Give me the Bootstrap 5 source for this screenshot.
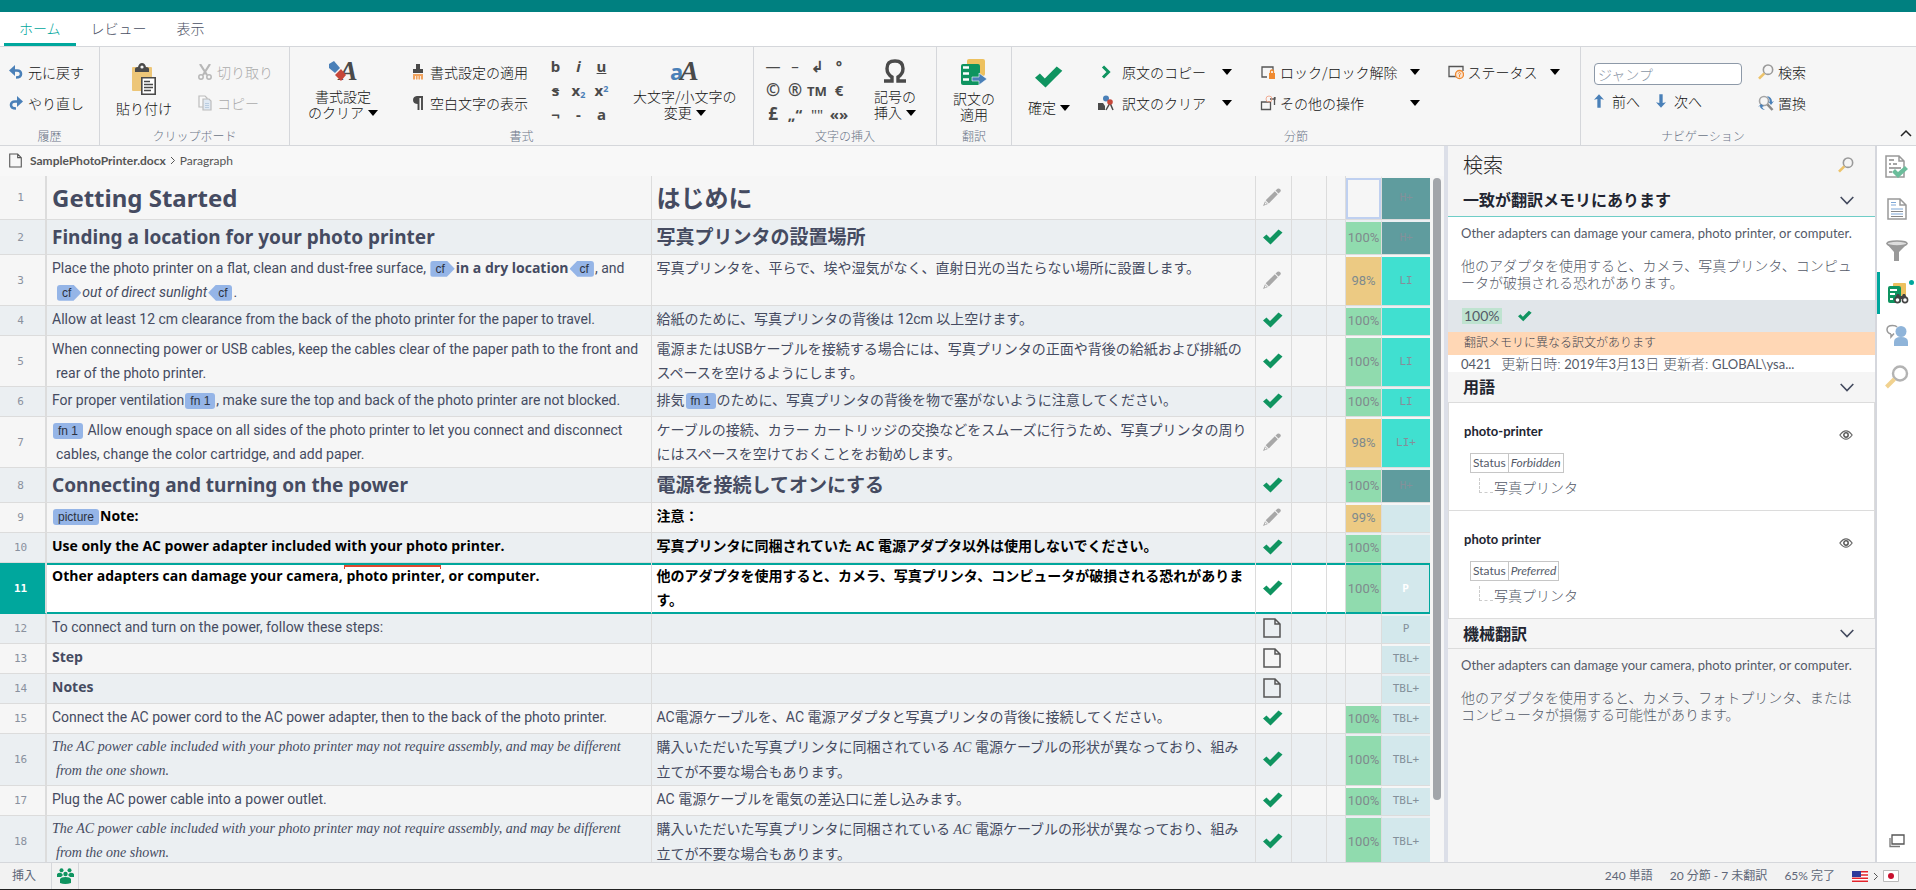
<!DOCTYPE html>
<html lang="ja">
<head>
<meta charset="utf-8">
<meta name="viewport" content="width=device-width, initial-scale=1">
<title>SamplePhotoPrinter.docx</title>
<link href="https://cdn.jsdelivr.net/npm/bootstrap@5.3.0/dist/css/bootstrap.min.css" rel="stylesheet">
<style>
:root{--teal:#00a79d;--ink:#4a4f63;--line:#dcdcdc;--ui:"Noto Sans CJK JP",sans-serif}
body{font-family:var(--ui);font-size:14px;line-height:20px;color:#222;background:#f6f6f6;overflow:hidden}
button{background:none;border:0;padding:0;color:inherit;font:inherit;text-align:center}
svg{display:block;flex:none}
.brandbar{height:12px;background:#008080}
.tabs{height:35px;background:#fff;border-bottom:1px solid #d5d7db;padding-left:4px;font-weight:300}
.tabs .nav-link{color:var(--ink);padding:6px 15px 0;height:34px;border-bottom:3px solid transparent}
.tabs .nav-link.active{color:var(--teal);border-color:var(--teal)}
.ribbon{height:99px;border-bottom:1px solid #d5d7db;font-weight:300;color:#111}
.rgroup{position:relative;display:flex;flex-direction:column;border-right:1px solid #d5d7db;height:98px}
.rgroup>.tools{flex:1;display:flex;align-items:flex-start}
.rlabel{font-size:12px;line-height:18px;color:#6a7486;text-align:center;height:18px}
.cmd{display:flex;align-items:center;height:20px;white-space:nowrap;text-align:left}
.cmd svg{width:16px;height:16px}
.stack{display:flex;flex-direction:column;gap:11px;padding-top:15px}
.bigcmd{display:flex;flex-direction:column;align-items:center;padding-top:12px;line-height:16px;white-space:nowrap}
.bigcmd svg.pic{margin-bottom:5px;overflow:visible}
.clearfmt{margin-left:18px}
.tri{display:inline-block;border:5px solid transparent;border-top:6px solid #000;border-bottom:0;vertical-align:2px;margin-left:4px}
.off{opacity:.35}
.glyphs{display:grid;justify-items:center;align-items:center;grid-auto-rows:24px;color:#4a4a4a;font-family:"Noto Sans",sans-serif;font-weight:700;padding-top:7px}
.glyphs button{font-size:15px;line-height:24px;min-width:20px}
.glyphs .wide{font-size:17px}
.glyphs sub,.glyphs sup{font-size:9px;color:#4a80b8}
.jump{height:22px;width:148px;padding:0 3px;font-size:14px;font-weight:300;border:1px solid #8d99a8;border-radius:4px;background:#fff}
.jump::placeholder{color:#8a96a6}
.navtools{display:flex;flex-direction:column;gap:6px;padding:16px 0 0 13px}
.crumbs{height:30px;background:#f8f8f8;font-size:12px;padding-left:9px;color:#555;font-family:Lato,sans-serif}
.seg{width:100%;border-collapse:separate;border-spacing:0;table-layout:fixed;color:#454b61;font-family:Roboto,"Noto Sans CJK JP",sans-serif;line-height:24px}
.seg tr{background:#f6f6f6}.seg tr:nth-child(even){background:#ebeff2}
.seg td{height:30px;padding:1px 4px 1px 5px;border-bottom:1px solid var(--line);border-right:1px solid var(--line);vertical-align:top}
.seg td:nth-child(2){padding-left:9px;text-indent:-4px}
.seg td:first-child{padding:2px 4px 0 0;text-align:center;vertical-align:middle;border-right:2px solid var(--line);color:#8a919e;font:11px/24px "DejaVu Sans Mono",monospace}
.seg b,.seg .strong-row{font-family:"Open Sans","Noto Sans CJK JP",sans-serif;font-weight:700}
.seg .strong-row{color:#000}
.seg td:nth-child(4){vertical-align:middle;padding:0 0 0 7px}
.seg td.pct,.seg td.loc{border-top:2px solid transparent;background-clip:padding-box;vertical-align:middle;text-align:center;padding:0;font-size:13px;color:#7f8a8d}
.seg td.loc{border-right:0;font:11px/20px "DejaVu Sans Mono",monospace;color:#83909a}
.p100{background-color:#90dbae}.p98{background-color:#ecca83}
.lh{background-color:#5f9c9e}.ll{background-color:#40e0d0}.lp{background-color:#d3e8ec}
.seg tr.h1row td{height:44px}
.seg tr.h2row td{height:35px}
.seg tr.h1row td.txt{font:700 24px/24px "Noto Sans","Noto Sans CJK JP",sans-serif;padding-top:10px}
.seg tr.h2row td.txt{font:700 19px/24px "Noto Sans","Noto Sans CJK JP",sans-serif;padding-top:5px}
.seg tr.cur{background:#fff}
.seg tr.cur td{box-shadow:inset 0 2px var(--teal),inset 0 -1px var(--teal);border-bottom-color:var(--teal);color:#000}
.seg tr.cur td:first-child{background:var(--teal);border-right-color:var(--line);color:#fff;font-weight:700}
.seg tr.cur td.pct,.seg tr.cur td.loc{border-top-color:var(--teal);box-shadow:inset 0 -1px var(--teal);color:#7f8a8d}
.seg tr.cur td.loc{border-right:1px solid var(--teal);color:#fff;font-weight:700}
.serif-it{font-family:"Liberation Serif","Noto Sans CJK JP",serif;font-style:italic}
.empty{box-shadow:inset 0 0 0 2px #bfd0f0}
.chip{display:inline-block;background:#95b5e7;color:#2b3140;font:normal 12px/16px "Liberation Sans",sans-serif;text-indent:0;padding:0 5px;border-radius:3px;margin:0 1px}
.chip.open{padding-right:10px;clip-path:polygon(0 0,68% 0,100% 50%,68% 100%,0 100%)}
.chip.close-t{padding-left:10px;clip-path:polygon(32% 0,100% 0,100% 100%,32% 100%,0 50%)}
.term{position:relative;text-indent:0;display:inline-block}
.term::before{content:"";position:absolute;left:-2px;right:0;top:1px;height:4px;border:1px solid #e0482f;border-top-width:2px;border-bottom:0}
.sbar{width:14px;padding:2px 3px 0}
.sbar div{width:8px;height:91%;background:#a2a5aa;border-radius:4px}
.side{width:433px;border-left:4px solid #dcdfe8;border-right:2px solid #d5d7dd;background:#f5f5f5;color:#545a68;font-family:Lato,"Noto Sans CJK JP",sans-serif}
.side h2{font-size:20px;font-weight:300;color:#222;margin:0;line-height:38px}
.side h3{font-size:16px;font-weight:700;color:#222531;margin:0;line-height:28px}
.side article b{color:#222531;font-size:13px}
.sec{display:flex;justify-content:space-between;align-items:center;padding:0 21px 0 15px;height:30px}
.mt{background:#fff;padding:6px 13px 9px;line-height:17px;font-family:"Noto Sans CJK JP",sans-serif;font-weight:300}
.mt p{margin:0 0 14px;font:13px/20px Lato,sans-serif}
.tmscore{height:32px;background:#e1e6ea;padding-left:14px}
.tmscore span{background:#bfe3d0;padding:0 2px;line-height:16px}
.tmnote{background:#ffd7b5;height:23px;line-height:21px;padding-left:16px;font-size:12px;font-weight:300;color:#3f4450}
.tmmeta{background:#fff;height:17px;line-height:17px;padding-left:13px;font-weight:300}
.tmmeta span{font-size:13px;font-weight:400}
.termcard{background:#fff;border:1px solid var(--line);border-top:0;height:108px;padding:18px 21px 0 15px}
.sec+.termcard{border-top:1px solid var(--line);height:109px}
.st{display:inline-flex;border:1px solid #c6c6c6;font-size:12px;line-height:18px;margin:12px 0 0 6px}
.st span{padding:0 2px}.st span+span{border-left:1px solid #c6c6c6;font-style:italic}
.tr-line{display:flex;margin-top:5px;font-weight:300}
.tree{width:14px;height:15px;border-left:1px dashed #ccc;border-bottom:1px dashed #ccc;margin:0 1px 0 15px}
.rail{width:39px;background:#fff}
.rail button{height:42px;width:39px;display:flex;align-items:center;justify-content:center;position:relative}
.rail button.on{border-left:3px solid var(--teal)}
.dot{position:absolute;right:2px;top:8px;width:5px;height:5px;border-radius:50%;background:var(--teal)}
.status{height:28px;background:#f2f2f2;border-top:1px solid #d5d7db;border-bottom:1px solid #222;font-size:12px;color:#5f6778;font-family:Lato,"Noto Sans CJK JP",sans-serif}
.status .mode{width:52px;border-right:1px solid #d5d7db;padding-left:12px}
.status .ppl{width:27px;border-right:1px solid #d5d7db}
.counts{gap:17px;padding-right:17px}
</style>
</head>
<body>
<svg width="0" height="0" class="position-absolute">
<symbol id="ok" viewBox="0 0 20 16"><path d="M0 8.500L3.500 5.500L7 9L15.500 .500L19.500 3.500L7.500 15.500Z" fill="#0f9460"/></symbol>
<symbol id="pen" viewBox="0 0 18 18"><path d="M12.500 2.500L14.500 .700Q16 0 17.200 1.200T17.300 3.800L15.500 5.500ZM11.800 3.300L14.800 6.300L5.800 15.400L2.700 12.300ZM2 13.200L4.900 16.100L0 18Z" fill="#a8a8a8"/><path d="M2.200 14.200L3.800 15.800L1.800 16.500Z" fill="#f6f6f6"/></symbol>
<symbol id="doc" viewBox="0 0 18 20"><path d="M1 1H12L17 6V19H1Z M12 1V6H17" fill="none" stroke="#555" stroke-width="1.500"/></symbol>
<symbol id="mag" viewBox="0 0 24 24"><circle cx="15" cy="8.500" r="7" fill="none" stroke="#9a9a9a" stroke-width="2.400"/><path d="M9.500 14L1.500 22" stroke="#edc36a" stroke-width="4"/></symbol>
<symbol id="chev" viewBox="0 0 14 9"><path d="M.700 1L7 7.600L13.300 1" fill="none" stroke="#434a5e" stroke-width="1.600"/></symbol>
<symbol id="eye" viewBox="0 0 16 12"><path d="M1 6Q8-3.500 15 6Q8 15.500 1 6Z" fill="none" stroke="#666" stroke-width="1.400"/><circle cx="8" cy="6" r="2.500" fill="none" stroke="#555" stroke-width="1.700"/></symbol>
</svg>

<div class="d-flex flex-column vh-100">
<header>
<div class="brandbar"></div>
<nav class="nav tabs">
<a class="nav-link active" href="#">ホーム</a><a class="nav-link" href="#">レビュー</a><a class="nav-link" href="#">表示</a>
</nav>
<div class="ribbon d-flex">
  <section class="rgroup" style="width:100px">
    <div class="tools ps-2"><div class="stack">
      <button class="cmd gap-1"><svg viewBox="0 0 16 16"><path d="M3 6.500H9Q13 6.500 13 10T8 13.500" fill="none" stroke="#4a80b8" stroke-width="2.600"/><path d="M7 1L1 6.500L7 12Z" fill="#4a80b8"/></svg>元に戻す</button>
      <button class="cmd gap-1"><svg viewBox="0 0 16 16"><path d="M13 6.500H7Q3 6.500 3 10T8 13.500" fill="none" stroke="#4a80b8" stroke-width="2.600"/><path d="M9 1L15 6.500L9 12Z" fill="#4a80b8"/></svg>やり直し</button>
    </div></div><div class="rlabel">履歴</div>
  </section>
  <section class="rgroup" style="width:190px">
    <div class="tools justify-content-between ps-3 pe-3">
      <button class="bigcmd pt-3"><svg class="pic" width="26" height="32" viewBox="0 0 26 32"><rect x="1" y="4" width="20" height="24" rx="1" fill="#edc678"/><path d="M4 9V6Q4 4 7 4Q8 0 11 0T15 4Q18 4 18 6V9Z" fill="#4a4a4a"/><circle cx="11" cy="4" r="1.600" fill="#f6f6f6"/><path d="M10.800 14.800H24.200V31.200H10.800Z" fill="#fff" stroke="#4a4a4a" stroke-width="1.600"/><path d="M13 18.500H19M13 21.500H22M13 24.500H22M13 27.500H20" stroke="#4a4a4a" stroke-width="1.400"/></svg>貼り付け</button>
      <div class="stack">
      <button class="cmd gap-1 off" disabled><svg viewBox="0 0 16 16"><path d="M3 0L10 11M13 0L6 11" stroke="#444" stroke-width="2.200"/><g fill="none" stroke="#444" stroke-width="1.500"><circle cx="4" cy="13" r="2.200"/><circle cx="12" cy="13" r="2.200"/></g></svg>切り取り</button>
      <button class="cmd gap-1 off" disabled><svg viewBox="0 0 16 16"><g fill="#fff" stroke="#555" stroke-width="1.200"><path d="M2 1H8L10 3V12H2Z"/><path fill="#b9d2ee" d="M6 4H12L14 6V15H6Z"/></g><path d="M8 8.500H12M8 10.500H12M8 12.500H12" stroke="#4a80b8"/></svg>コピー</button>
      </div>
    </div><div class="rlabel">クリップボード</div>
  </section>
  <section class="rgroup" style="width:464px">
    <div class="tools">
      <button class="bigcmd clearfmt"><svg class="pic" width="32" height="24" viewBox="0 0 32 24"><text x="12" y="21" font-family="Liberation Serif" font-weight="700" font-style="italic" font-size="28" fill="#4a4a4a">A</text><path d="M2 5L7 2L13 9L8 14L2 9Z" fill="#4a80b8"/><path d="M8 16L14 10L19 16L14 22Z" fill="#c6473a"/></svg>書式設定<span>のクリア<i class="tri"></i></span></button>
      <div class="stack ms-4 ps-2">
      <button class="cmd gap-1"><svg viewBox="0 0 16 16"><path d="M6 0H10V5H13V9H3V5H6Z" fill="#4a4a4a"/><path d="M3 10H13V15.500H3Z" fill="#f0a35f"/><path d="M5.500 12V16M8 12V16M10.500 12V16" stroke="#fff" stroke-width=".800"/></svg>書式設定の適用</button>
      <button class="cmd gap-1"><svg viewBox="0 0 16 16"><path d="M6.500 2H13M8.500 2V15M12 2V15" stroke="#4a4a4a" stroke-width="1.900"/><path d="M8 1Q3 1 3 5T8 9Z" fill="#4a4a4a"/></svg>空白文字の表示</button>
      </div>
      <div class="glyphs ms-3" style="grid-template-columns:repeat(3,23px)">
      <button>b</button><button><i>i</i></button><button><u>u</u></button><button><s>s</s></button><button>x<sub>2</sub></button><button>x<sup>2</sup></button><button>¬</button><button>-</button><button>a</button>
      </div>
      <button class="bigcmd ms-3 ps-1"><svg class="pic" width="30" height="24" viewBox="0 0 30 24"><text x="0" y="21" font-family="Noto Sans" font-weight="700" font-size="22" fill="#4a80b8">a</text><text x="10" y="21" font-family="Liberation Serif" font-weight="700" font-style="italic" font-size="28" fill="#4a4a4a">A</text></svg>大文字/小文字の<span>変更<i class="tri"></i></span></button>
    </div><div class="rlabel">書式</div>
  </section>
  <section class="rgroup" style="width:183px">
    <div class="tools ps-2">
      <div class="glyphs" style="grid-template-columns:repeat(4,22px)">
      <button class="fw-normal">—</button><button class="fw-normal">–</button><button>↲</button><button>°</button><button class="wide">©</button><button class="wide">®</button><button><small>TM</small></button><button>€</button><button class="wide">£</button><button>„“</button><button class="fw-normal">""</button><button>«»</button>
      </div>
      <button class="bigcmd ms-4"><svg class="pic" width="24" height="24" viewBox="0 0 24 24"><path d="M1 22H9V18Q4 15 4 9.500Q4 2 12 2T20 9.500Q20 15 15 18V22H23" fill="none" stroke="#4a4a4a" stroke-width="3.400"/></svg>記号の<span>挿入<i class="tri"></i></span></button>
    </div><div class="rlabel">文字の挿入</div>
  </section>
  <section class="rgroup" style="width:75px">
    <div class="tools justify-content-center"><button class="bigcmd"><svg class="pic" width="28" height="26" viewBox="0 0 28 26"><rect x="7" y="0" width="18" height="17" rx="2" fill="#edc15f"/><rect x="1" y="5" width="19" height="21" rx="2" fill="#0f9460"/><path d="M3 8.500H9M3 14.500H9M3 20.500H9" stroke="#fff" stroke-width="2.400"/><path d="M12 18H19V14L27 20L19 26V22H12Z" fill="#4a80b8" stroke="#fff" stroke-width=".600"/></svg>訳文の<span>適用</span></button></div>
    <div class="rlabel">翻訳</div>
  </section>
  <section class="rgroup" style="width:569px">
    <div class="tools">
      <button class="bigcmd ms-3 pt-3"><svg class="pic mb-2" width="28" height="28"><use href="#ok"/></svg><span>確定<i class="tri"></i></span></button>
      <div class="stack ms-4 ps-1">
      <button class="cmd gap-2"><svg viewBox="0 0 16 16"><path d="M5 2.500L10.500 8L5 13.500" fill="none" stroke="#0f9460" stroke-width="3"/></svg>原文のコピー<i class="tri ms-2"></i></button>
      <button class="cmd gap-2"><svg viewBox="0 0 16 16"><path d="M0 15V8H5L7 11V15Z" fill="#4a4a4a"/><path d="M8 15L12 8L15 15" fill="none" stroke="#4a4a4a" stroke-width="1.500"/><circle cx="8" cy="3.500" r="3" fill="#4a80b8"/><circle cx="12" cy="7" r="2.800" fill="#c6473a"/></svg>訳文のクリア<i class="tri ms-2"></i></button>
      </div>
      <div class="stack ms-4 ps-1">
      <button class="cmd gap-1"><svg viewBox="0 0 16 16"><path d="M7 13H2V3H13V7" fill="none" stroke="#555" stroke-width="1.300"/><rect x="9" y="9" width="6" height="6" fill="#f08a30"/><path d="M10.500 9V7Q12 5 13.500 7V9" fill="none" stroke="#f08a30" stroke-width="1.300"/></svg>ロック/ロック解除<i class="tri ms-2"></i></button>
      <button class="cmd gap-1"><svg viewBox="0 0 16 16"><path d="M1.500 7H10.500V14.500H1.500ZM10 4H15V2M14.500 2V10" fill="none" stroke="#555" stroke-width="1.300"/><circle cx="9" cy="4" r="3" fill="none" stroke="#f0a58a" stroke-width=".900"/></svg>その他の操作<i class="tri ms-auto"></i></button>
      </div>
      <div class="stack ms-4 ps-1">
      <button class="cmd gap-1"><svg viewBox="0 0 16 16"><path d="M8 12.500H1V2.500H15V7" fill="none" stroke="#555" stroke-width="1.300"/><circle cx="11.500" cy="10.500" r="4" fill="#fbe3cf" stroke="#f08a30" stroke-width="1.300"/><path d="M10.300 9.500Q11.500 7.500 12.700 9.500L11.500 11V13" fill="none" stroke="#f08a30"/></svg>ステータス<i class="tri ms-2"></i></button>
      </div>
    </div><div class="rlabel">分節</div>
  </section>
  <section class="rgroup flex-grow-1 border-0 align-items-start">
    <div class="tools">
      <div class="navtools"><input class="form-control jump" placeholder="ジャンプ" aria-label="ジャンプ">
        <div class="d-flex gap-3"><button class="cmd gap-2"><svg viewBox="0 0 12 16" style="width:10px"><path d="M6 0L12 6.500L8 5.500V16H4V5.500L0 6.500Z" fill="#4a80b8"/></svg>前へ</button><button class="cmd gap-2"><svg viewBox="0 0 12 16" style="width:10px"><path d="M6 16L12 9.500L8 10.500V0H4V10.500L0 9.500Z" fill="#4a80b8"/></svg>次へ</button></div></div>
      <div class="stack ms-3">
      <button class="cmd gap-1"><svg><use href="#mag"/></svg>検索</button>
      <button class="cmd gap-1"><svg viewBox="0 0 16 16"><circle cx="6" cy="6" r="4.500" fill="none" stroke="#a5a5a5" stroke-width="1.600"/><path d="M9.500 9.500L14.500 15" stroke="#8a8a8a" stroke-width="2.600"/><path d="M9 1Q14 2 14 7L16 6L13 10L10 6L12 7Q12 4 9 1ZM7 15Q2 14 2 11L0 12L3 9L6 11L4 12Q5 14 7 15Z" fill="#4a80b8"/></svg>置換</button>
      </div>
    </div><div class="rlabel ms-3" style="width:212px">ナビゲーション</div>
    <button class="position-absolute bottom-0 end-0 me-1 mb-1" aria-label="リボンを折りたたむ"><svg width="12" height="14" viewBox="0 0 12 14"><path d="M1 9L6 4L11 9" fill="none" stroke="#222" stroke-width="1.500"/></svg></button>
  </section>
</div>
</header>

<main class="d-flex flex-grow-1" style="min-height:0">
<div class="flex-grow-1 d-flex flex-column overflow-hidden">
  <div class="crumbs d-flex align-items-center gap-1"><svg class="me-1" width="13" height="15"><use href="#doc"/></svg><b>SamplePhotoPrinter.docx</b><svg width="6" height="9" viewBox="0 0 6 9"><path d="M1 1L4.500 4.500L1 8" fill="none" stroke="#555"/></svg><span>Paragraph</span></div>
  <div class="d-flex flex-grow-1 overflow-hidden">
  <div class="flex-grow-1 overflow-hidden">
  <table class="seg">
  <colgroup><col style="width:47px"><col><col><col style="width:36px"><col style="width:35px"><col style="width:19px"><col style="width:36px"><col style="width:48px"></colgroup>
  <tbody>
  <tr class="h1row"><td>1</td><td class="txt">Getting Started</td><td class="txt">はじめに</td><td><svg width="18" height="18"><use href="#pen"/></svg></td><td></td><td></td><td class="pct empty"></td><td class="loc lh">H+</td></tr>
  <tr class="h2row"><td>2</td><td class="txt">Finding a location for your photo printer</td><td class="txt">写真プリンタの設置場所</td><td><svg width="20" height="16"><use href="#ok"/></svg></td><td></td><td></td><td class="pct p100">100%</td><td class="loc lh">H+</td></tr>
  <tr><td>3</td><td>Place the photo printer on a flat, clean and dust-free surface, <span class="chip open">cf</span><b>in a dry location</b><span class="chip close-t">cf</span>, and <span class="chip open">cf</span><i>out of direct sunlight</i><span class="chip close-t">cf</span>.</td><td>写真プリンタを、平らで、埃や湿気がなく、直射日光の当たらない場所に設置します。</td><td><svg width="18" height="18"><use href="#pen"/></svg></td><td></td><td></td><td class="pct p98">98%</td><td class="loc ll">LI</td></tr>
  <tr><td>4</td><td>Allow at least 12 cm clearance from the back of the photo printer for the paper to travel.</td><td>給紙のために、写真プリンタの背後は 12cm 以上空けます。</td><td><svg width="20" height="16"><use href="#ok"/></svg></td><td></td><td></td><td class="pct p100">100%</td><td class="loc ll"></td></tr>
  <tr><td>5</td><td>When connecting power or USB cables, keep the cables clear of the paper path to the front and rear of the photo printer.</td><td>電源またはUSBケーブルを接続する場合には、写真プリンタの正面や背後の給紙および排紙のスペースを空けるようにします。</td><td><svg width="20" height="16"><use href="#ok"/></svg></td><td></td><td></td><td class="pct p100">100%</td><td class="loc ll">LI</td></tr>
  <tr><td>6</td><td>For proper ventilation<span class="chip">fn 1</span>, make sure the top and back of the photo printer are not blocked.</td><td>排気<span class="chip">fn 1</span>のために、写真プリンタの背後を物で塞がないように注意してください。</td><td><svg width="20" height="16"><use href="#ok"/></svg></td><td></td><td></td><td class="pct p100">100%</td><td class="loc ll">LI</td></tr>
  <tr><td>7</td><td><span class="chip">fn 1</span> Allow enough space on all sides of the photo printer to let you connect and disconnect cables, change the color cartridge, and add paper.</td><td>ケーブルの接続、カラー カートリッジの交換などをスムーズに行うため、写真プリンタの周りにはスペースを空けておくことをお勧めします。</td><td><svg width="18" height="18"><use href="#pen"/></svg></td><td></td><td></td><td class="pct p98">98%</td><td class="loc ll">LI+</td></tr>
  <tr class="h2row"><td>8</td><td class="txt">Connecting and turning on the power</td><td class="txt">電源を接続してオンにする</td><td><svg width="20" height="16"><use href="#ok"/></svg></td><td></td><td></td><td class="pct p100">100%</td><td class="loc lh">H+</td></tr>
  <tr><td>9</td><td class="strong-row"><span class="chip">picture</span>Note:</td><td class="strong-row">注意：</td><td><svg width="18" height="18"><use href="#pen"/></svg></td><td></td><td></td><td class="pct p98">99%</td><td class="loc lp"></td></tr>
  <tr><td>10</td><td class="strong-row">Use only the AC power adapter included with your photo printer.</td><td class="strong-row">写真プリンタに同梱されていた AC 電源アダプタ以外は使用しないでください。</td><td><svg width="20" height="16"><use href="#ok"/></svg></td><td></td><td></td><td class="pct p100">100%</td><td class="loc lp"></td></tr>
  <tr class="cur"><td>11</td><td class="strong-row">Other adapters can damage your camera, <span class="term">photo printer</span>, or computer.</td><td class="strong-row">他のアダプタを使用すると、カメラ、写真プリンタ、コンピュータが破損される恐れがあります。</td><td><svg width="20" height="16"><use href="#ok"/></svg></td><td></td><td></td><td class="pct p100">100%</td><td class="loc lp">P</td></tr>
  <tr><td>12</td><td>To connect and turn on the power, follow these steps:</td><td></td><td><svg width="18" height="20"><use href="#doc"/></svg></td><td></td><td></td><td></td><td class="loc lp">P</td></tr>
  <tr><td>13</td><td><b>Step</b></td><td></td><td><svg width="18" height="20"><use href="#doc"/></svg></td><td></td><td></td><td></td><td class="loc lp">TBL+</td></tr>
  <tr><td>14</td><td><b>Notes</b></td><td></td><td><svg width="18" height="20"><use href="#doc"/></svg></td><td></td><td></td><td></td><td class="loc lp">TBL+</td></tr>
  <tr><td>15</td><td>Connect the AC power cord to the AC power adapter, then to the back of the photo printer.</td><td>AC電源ケーブルを、AC 電源アダプタと写真プリンタの背後に接続してください。</td><td><svg width="20" height="16"><use href="#ok"/></svg></td><td></td><td></td><td class="pct p100">100%</td><td class="loc lp">TBL+</td></tr>
  <tr><td>16</td><td class="serif-it">The AC power cable included with your photo printer may not require assembly, and may be different from the one shown.</td><td>購入いただいた写真プリンタに同梱されている <span class="serif-it">AC</span> 電源ケーブルの形状が異なっており、組み立てが不要な場合もあります。</td><td><svg width="20" height="16"><use href="#ok"/></svg></td><td></td><td></td><td class="pct p100">100%</td><td class="loc lp">TBL+</td></tr>
  <tr><td>17</td><td>Plug the AC power cable into a power outlet.</td><td>AC 電源ケーブルを電気の差込口に差し込みます。</td><td><svg width="20" height="16"><use href="#ok"/></svg></td><td></td><td></td><td class="pct p100">100%</td><td class="loc lp">TBL+</td></tr>
  <tr><td>18</td><td class="serif-it">The AC power cable included with your photo printer may not require assembly, and may be different from the one shown.</td><td>購入いただいた写真プリンタに同梱されている <span class="serif-it">AC</span> 電源ケーブルの形状が異なっており、組み立てが不要な場合もあります。</td><td><svg width="20" height="16"><use href="#ok"/></svg></td><td></td><td></td><td class="pct p100">100%</td><td class="loc lp">TBL+</td></tr>
  </tbody></table>
  </div>
  <div class="sbar"><div></div></div>
  </div>
</div>

<aside class="side flex-shrink-0">
  <div class="sec" style="height:38px"><h2>検索</h2><svg width="16" height="16"><use href="#mag"/></svg></div>
  <div class="sec" style="height:33px;border-bottom:1px solid #6fcdc7"><h3>一致が翻訳メモリにあります</h3><svg width="14" height="9"><use href="#chev"/></svg></div>
  <div class="mt"><p>Other adapters can damage your camera, photo printer, or computer.</p>他のアダプタを使用すると、カメラ、写真プリンタ、コンピュータが破損される恐れがあります。</div>
  <div class="tmscore d-flex align-items-center gap-3"><span>100%</span><svg width="14" height="12"><use href="#ok"/></svg></div>
  <div class="tmnote">翻訳メモリに異なる訳文があります</div>
  <div class="tmmeta"><span>0421 &nbsp; </span>更新日時: <span>2019</span>年<span>3</span>月<span>13</span>日 更新者: <span>GLOBAL\ysa...</span></div>
  <div class="sec"><h3>用語</h3><svg width="14" height="9"><use href="#chev"/></svg></div>
  <article class="termcard"><div class="d-flex justify-content-between align-items-center"><b>photo-printer</b><svg width="14" height="12" class="mt-2"><use href="#eye"/></svg></div><div class="st"><span>Status</span><span>Forbidden</span></div><div class="tr-line"><div class="tree"></div>写真プリンタ</div></article>
  <article class="termcard"><div class="d-flex justify-content-between align-items-center"><b>photo printer</b><svg width="14" height="12" class="mt-2"><use href="#eye"/></svg></div><div class="st"><span>Status</span><span>Preferred</span></div><div class="tr-line"><div class="tree"></div>写真プリンタ</div></article>
  <div class="sec" style="border-bottom:1px solid #dcdcdc"><h3>機械翻訳</h3><svg width="14" height="9"><use href="#chev"/></svg></div>
  <div class="mt bg-transparent"><p>Other adapters can damage your camera, photo printer, or computer.</p>他のアダプタを使用すると、カメラ、フォトプリンタ、またはコンピュータが損傷する可能性があります。</div>
</aside>

<nav class="rail flex-shrink-0 d-flex flex-column">
  <button><svg width="24" height="24" viewBox="0 0 24 24"><path d="M1 1H14L19 6V22H1Z M14 1V6H19" fill="#fff" stroke="#999" stroke-width="1.500"/><path d="M4 5H9M4 9H6M8 9H12M4 13H16M4 17H7" stroke="#888" stroke-width="1.300"/><path d="M7 17L10 14L13 17L20 11L23 14L13 23Z" fill="#6bbd9b"/></svg></button>
  <button><svg width="20" height="22" viewBox="0 0 20 22"><path d="M1 1H13L19 7V21H1Z M13 1V7H19" fill="#fff" stroke="#999" stroke-width="1.500"/><path d="M4 4.500H9M4 7H9M4 11H16M4 16H16" stroke="#7fa8d8" stroke-width="1.100"/><path d="M4 13.500H16M4 18.500H16" stroke="#888" stroke-width="1.100"/></svg></button>
  <button><svg width="22" height="22" viewBox="0 0 22 22"><path d="M0 3L8 12V21H13V12L22 3Z" fill="#999"/><ellipse cx="11" cy="3.500" rx="10" ry="2.500" fill="#ddd" stroke="#999" stroke-width="1.500"/></svg></button>
  <button class="on"><svg width="22" height="22" viewBox="0 0 22 22"><rect x="6" y="1" width="13" height="13" rx="1" fill="#edc15f"/><rect x="1" y="4" width="13" height="17" rx="2" fill="#0f9460"/><path d="M3 8H10M3 12H8M3 17H6" stroke="#fff" stroke-width="1.800"/><path d="M8 16L10 12H12L13 14H15L16 12H18L20 16L20 17H8Z" fill="#444"/><g fill="#fff" stroke="#444" stroke-width="1.600"><circle cx="10.500" cy="18" r="2.600"/><circle cx="18" cy="18" r="2.600"/></g></svg><span class="dot"></span></button>
  <button><svg width="22" height="22" viewBox="0 0 22 22"><path d="M5 10Q1 9 1 5.500Q1 1.500 6.500 1.500Q10 1.500 11 3M5 10V13L8 9.500" fill="none" stroke="#999" stroke-width="1.500"/><circle cx="15" cy="7.500" r="5.500" fill="#8fb4d9"/><path d="M8 22V18Q8 13 15 13T22 18V22Z" fill="#8fb4d9"/></svg></button>
  <button><svg width="24" height="24" opacity=".75"><use href="#mag"/></svg></button>
  <button class="mt-auto"><svg width="16" height="14" viewBox="0 0 16 14"><path d="M3 1H15V10H3Z" fill="#fff" stroke="#555" stroke-width="1.300"/><path d="M1 4V12.500H11" fill="none" stroke="#777" stroke-width="1.300"/></svg></button>
</nav>
</main>

<footer class="status d-flex flex-shrink-0">
  <div class="mode d-flex align-items-center">挿入</div>
  <div class="ppl d-flex align-items-center justify-content-center"><svg width="17" height="16" viewBox="0 0 17 16"><g fill="#0f9460"><circle cx="4.500" cy="2.200" r="2"/><circle cx="12.500" cy="2.200" r="2"/><circle cx="8.500" cy="6" r="2.200"/><path d="M0 9V6Q1 4.500 4 4.700L6 7L4 9ZM17 9V6Q16 4.500 13 4.700L11 7L13 9ZM3 15V11Q4 9 8.500 9T14 11V15Q8 17 3 15Z"/></g></svg></div>
  <div class="counts ms-auto d-flex align-items-center"><span>240 単語</span><span>20 分節 - 7 未翻訳</span><span>65% 完了</span>
  <span class="d-flex align-items-center gap-1"><svg width="16" height="11" viewBox="0 0 16 11"><path d="M0 0H16V11H0Z" fill="#fff"/><path d="M0 .800H16M0 4H16M0 7.200H16M0 10.300H16" stroke="#e3242b" stroke-width="1.600"/><path d="M0 0H9V6H0Z" fill="#2e3a9a"/></svg><svg width="7" height="9" viewBox="0 0 7 9"><path d="M2 1L5.500 4.500L2 8" fill="none" stroke="#555"/></svg><svg width="16" height="12" viewBox="0 0 16 12"><path d="M.500 .500H15.500V11.500H.500Z" fill="#fff" stroke="#bbb"/><circle cx="8" cy="6" r="3" fill="#c8102e"/></svg></span></div>
</footer>
</div>
<script src="https://cdn.jsdelivr.net/npm/bootstrap@5.3.0/dist/js/bootstrap.bundle.min.js"></script>
</body>
</html>
